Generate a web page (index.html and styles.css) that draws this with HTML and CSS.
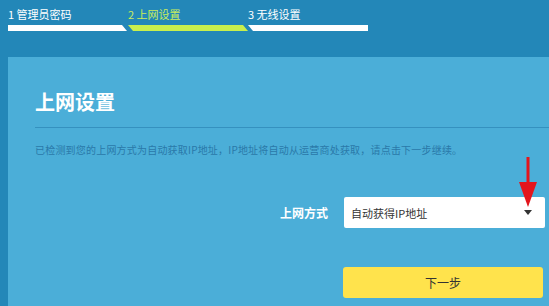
FILE: index.html
```html
<!DOCTYPE html>
<html lang="zh-CN">
<head>
<meta charset="utf-8">
<title>上网设置</title>
<link rel="stylesheet" href="styles.css">
</head>
<body>
<div class="page">
  <header class="steps">
    <div class="step step-first">
      <div class="step-label">1 管理员密码</div>
      <div class="step-bar"></div>
    </div>
    <div class="step step-mid active">
      <div class="step-label">2 上网设置</div>
      <div class="step-bar"></div>
    </div>
    <div class="step step-last">
      <div class="step-label">3 无线设置</div>
      <div class="step-bar"></div>
    </div>
  </header>
  <main class="panel">
    <h1 class="title">上网设置</h1>
    <div class="divider"></div>
    <p class="desc">已检测到您的上网方式为自动获取IP地址，IP地址将自动从运营商处获取，请点击下一步继续。</p>
    <div class="form">
      <label class="form-label">上网方式</label>
      <div class="select">
        <span class="select-text">自动获得IP地址</span>
        <span class="caret"></span>
      </div>
      <div></div>
      <button class="btn-next">下一步</button>
    </div>
    <svg class="arrow" width="20" height="52" viewBox="0 0 20 52">
      <rect x="8.5" y="0" width="3" height="30" fill="#e3151c"/>
      <polygon points="1,25 19,25 10,50" fill="#e3151c"/>
    </svg>
  </main>
</div>
</body>
</html>
```
FILE: styles.css
```css
* { box-sizing: border-box; }
html, body {
  margin: 0;
  padding: 0;
  width: 549px;
  height: 306px;
  overflow: hidden;
  background: #2387b8;
  font-family: "Noto Sans CJK SC", "Noto Sans", sans-serif;
}
.page {
  display: flex;
  flex-direction: column;
  height: 306px;
}
.steps {
  display: flex;
  padding: 7px 0 0 8px;
  height: 57px;
}
.step {
  display: flex;
  flex-direction: column;
  width: 120px;
}
.step-label {
  font-size: 11px;
  line-height: 14px;
  color: #ffffff;
  white-space: nowrap;
}
.step-bar {
  margin-top: 4px;
  height: 6px;
  background: #ffffff;
}
.active .step-label { color: #c9ee5c; }
.active .step-bar { background: #c8ef4d; }
.step-first .step-bar {
  clip-path: polygon(0 0, 114px 0, 119px 100%, 0 100%);
}
.step-mid .step-bar {
  clip-path: polygon(0 0, 115px 0, 120px 100%, 5px 100%);
}
.step-last .step-bar {
  clip-path: polygon(0 0, 100% 0, 100% 100%, 5px 100%);
}
.panel {
  position: relative;
  flex: 1;
  margin-left: 8px;
  background: #4baed8;
  padding: 33px 4px 0 27px;
}
.title {
  margin: 0;
  font-size: 20px;
  line-height: 24px;
  font-weight: 700;
  color: #ffffff;
}
.divider {
  margin-top: 13px;
  margin-right: -4px;
  height: 1px;
  background: #3591bf;
}
.desc {
  margin: 15px 0 0 0;
  font-size: 10px;
  line-height: 14px;
  letter-spacing: 0.2px;
  color: #2a79a9;
  white-space: nowrap;
}
.form {
  margin-top: 40px;
  display: grid;
  grid-template-columns: 1fr 201px;
  column-gap: 16px;
  row-gap: 39px;
  align-items: center;
}
.form-label {
  justify-self: end;
  font-size: 12px;
  font-weight: 700;
  color: #ffffff;
}
.select {
  height: 31px;
  background: #ffffff;
  border-radius: 2px;
  display: flex;
  align-items: center;
  justify-content: space-between;
  padding: 0 13px 0 7px;
}
.select-text {
  font-size: 11px;
  color: #333333;
}
.caret {
  width: 0;
  height: 0;
  border-left: 4px solid transparent;
  border-right: 4px solid transparent;
  border-top: 5px solid #333333;
}
.btn-next {
  margin-left: -1px;
  width: 200px;
  height: 31px;
  border: none;
  border-radius: 3px;
  background: #ffe34c;
  font-family: inherit;
  font-size: 12px;
  color: #333333;
  padding: 0;
}
.arrow {
  position: absolute;
  left: 510px;
  top: 100px;
}
```
